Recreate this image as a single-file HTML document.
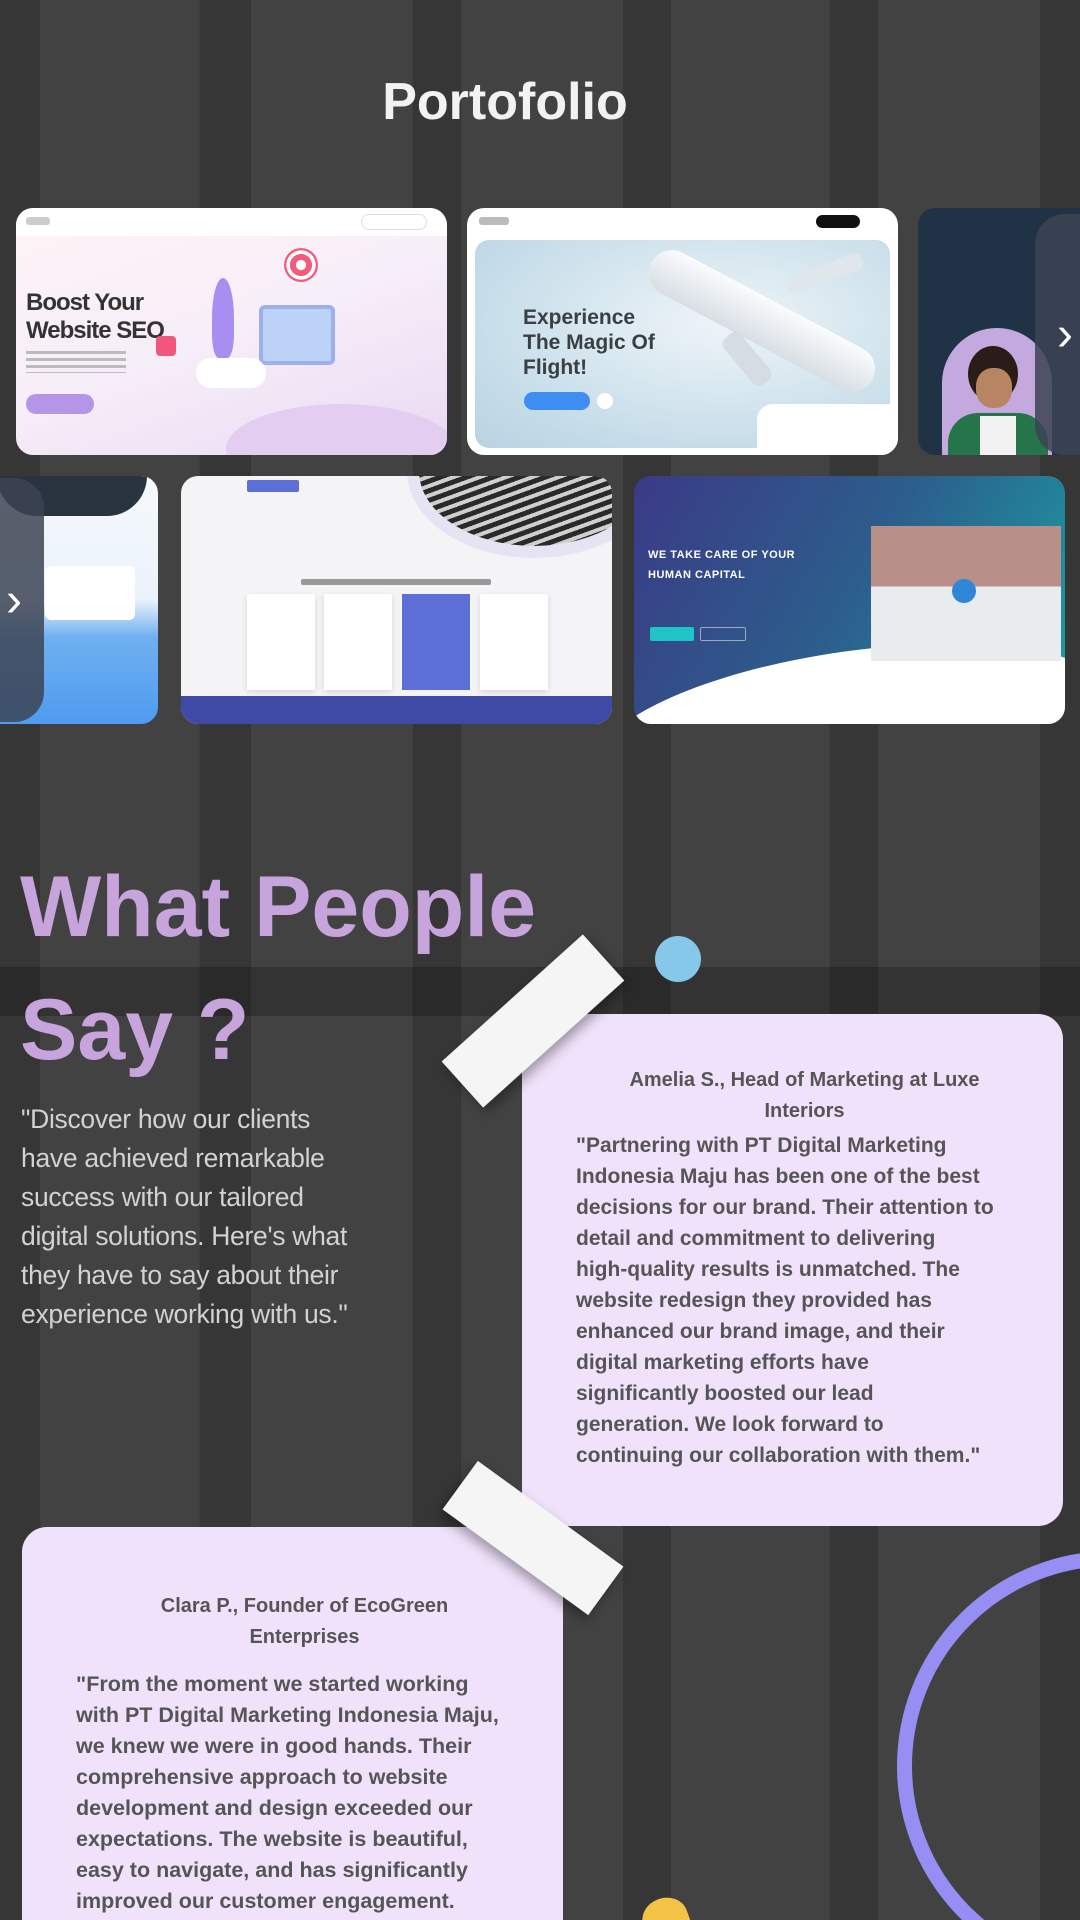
<!DOCTYPE html>
<html><head><meta charset="utf-8">
<style>
*{margin:0;padding:0;box-sizing:border-box}
html,body{width:1080px;height:1920px;overflow:hidden}
body{position:relative;font-family:"Liberation Sans",sans-serif;
background:repeating-linear-gradient(90deg,#363636 0 40px,#424242 40px 200px,#363636 200px 251px,#424242 251px 413px,#363636 413px 461px,#424242 461px 623px,#363636 623px 671px,#424242 671px 830px,#363636 830px 878px,#424242 878px 1040px,#363636 1040px 1080px)}
.a{position:absolute}
.card{position:absolute;border-radius:17px;overflow:hidden}
.band{position:absolute;left:0;top:967px;width:1080px;height:49px;background:rgba(0,0,0,.22)}
h1{position:absolute;left:0;width:1010px;text-align:center;top:72px;font-size:52px;font-weight:bold;color:#f2f2f2}
.wp{position:absolute;left:20px;color:#c8a4dc;font-size:86px;font-weight:bold;letter-spacing:0}
.para{position:absolute;left:21px;top:1100px;width:420px;color:#d2d2d2;font-size:26.5px;line-height:39px;white-space:nowrap;letter-spacing:-.3px}
.t{position:absolute;background:#f5f5f5;box-shadow:0 6px 12px rgba(0,0,0,.35)}
.tc{position:absolute;background:#f0e2fb;border-radius:25px;color:#4e4a52;font-weight:bold}
.tc .h{text-align:center;font-size:20px;line-height:31px;color:#555}
.tc .b{font-size:21px;line-height:31px;color:#555;white-space:nowrap}
.arr{position:absolute;background:rgba(60,68,84,.85);color:#fff;font-size:48px;display:flex;align-items:center;justify-content:center}
</style></head><body>
<div class="band"></div>
<h1>Portofolio</h1>

<div class="card" style="left:16px;top:208px;width:431px;height:247px;background:linear-gradient(160deg,#fff3f6 0%,#f6eef8 50%,#ead9f3 100%)">
 <div class="a" style="left:0;top:0;width:431px;height:28px;background:#fff"></div>
 <div class="a" style="left:10px;top:9px;width:24px;height:8px;background:#ccc;border-radius:3px"></div>
 <div class="a" style="left:345px;top:6px;width:66px;height:16px;border:1px solid #ddd;border-radius:8px"></div>
 <div class="a" style="left:10px;top:81px;font-size:24px;font-weight:bold;color:#333;line-height:28px;letter-spacing:-1px">Boost Your<br>Website SEO</div>
 <div class="a" style="left:10px;top:143px;width:100px;height:22px;background:repeating-linear-gradient(#bbb 0 3px,transparent 3px 7px)"></div>
 <div class="a" style="left:10px;top:186px;width:68px;height:20px;background:#b595e8;border-radius:10px"></div>
 <div class="a" style="left:210px;top:196px;width:230px;height:90px;border-radius:50%;background:#e3cdf0"></div>
 <div class="a" style="left:243px;top:97px;width:76px;height:60px;background:#bcd3f7;border:4px solid #9cb0ee;border-radius:6px"></div>
 <div class="a" style="left:196px;top:70px;width:22px;height:80px;background:#a88ef0;border-radius:50% 50% 30% 30%"></div>
 <div class="a" style="left:180px;top:150px;width:70px;height:30px;background:#fff;border-radius:15px"></div>
 <div class="a" style="left:268px;top:40px;width:34px;height:34px;border-radius:50%;background:radial-gradient(#fff 20%,#f35b7c 22% 45%,#fff 47% 60%,#f35b7c 62%)"></div>
 <div class="a" style="left:140px;top:128px;width:20px;height:20px;background:#f0577a;border-radius:4px"></div>
</div>

<div class="card" style="left:467px;top:208px;width:431px;height:247px;background:#fff">
 <div class="a" style="left:12px;top:9px;width:30px;height:8px;background:#bbb;border-radius:3px"></div>
 <div class="a" style="left:349px;top:7px;width:44px;height:13px;background:#111;border-radius:7px"></div>
 <div class="a" style="left:8px;top:32px;width:415px;height:208px;border-radius:14px;background:radial-gradient(ellipse at 60% 40%,#eef4f8,#c6dde9 70%,#b8d3e2)"></div>
 <div class="a" style="left:56px;top:97px;font-size:21px;font-weight:bold;color:#3a3f44;line-height:25px">Experience<br>The Magic Of<br>Flight!</div>
 <div class="a" style="left:57px;top:184px;width:66px;height:18px;background:#3d8df2;border-radius:9px"></div>
 <div class="a" style="left:130px;top:185px;width:16px;height:16px;background:#fff;border-radius:50%"></div>
 <div class="a" style="left:170px;top:90px;width:250px;height:46px;background:linear-gradient(#fafcfd,#d8dee4);border-radius:23px;transform:rotate(28deg)"></div>
 <div class="a" style="left:318px;top:56px;width:80px;height:18px;background:#dfe6ec;border-radius:8px;transform:rotate(-20deg)"></div>
 <div class="a" style="left:250px;top:140px;width:60px;height:22px;background:#d5dce3;border-radius:8px;transform:rotate(50deg)"></div>
 <div class="a" style="left:290px;top:196px;width:150px;height:60px;background:#fff;border-radius:16px"></div>
</div>

<div class="card" style="left:918px;top:208px;width:200px;height:247px;background:#1f3246">
 <div class="a" style="left:24px;top:120px;width:110px;height:160px;border-radius:55px 55px 0 0;background:#c3a9dd"></div>
 <div class="a" style="left:50px;top:138px;width:50px;height:56px;border-radius:50%;background:#2a1c16"></div>
 <div class="a" style="left:58px;top:160px;width:36px;height:40px;border-radius:45%;background:#b88563"></div>
 <div class="a" style="left:30px;top:205px;width:100px;height:60px;border-radius:30px 30px 0 0;background:#25744a"></div>
 <div class="a" style="left:62px;top:208px;width:36px;height:40px;background:#f2f2f2"></div>
</div>
<div class="arr" style="left:1035px;top:214px;width:60px;height:241px;border-radius:30px 0 0 30px">&#8250;</div>

<div class="card" style="left:-273px;top:476px;width:431px;height:248px;background:linear-gradient(#f6f9fd 0%,#eaf2fb 50%,#6fb0ef 65%,#4f9bf0 100%)">
 <div class="a" style="left:318px;top:90px;width:90px;height:54px;background:#fff;border-radius:6px"></div>
 <div class="a" style="left:270px;top:0px;width:150px;height:40px;background:#2a3440;border-radius:0 0 70px 70px"></div>
</div>
<div class="arr" style="left:-16px;top:478px;width:60px;height:244px;border-radius:0 30px 30px 0">&#8250;</div>

<div class="card" style="left:181px;top:476px;width:431px;height:248px;background:#f4f4f6">
 <div class="a" style="left:66px;top:4px;width:52px;height:12px;background:#5c6fd6;border-radius:2px"></div>
 <div class="a" style="left:238px;top:-80px;width:230px;height:150px;border-radius:50%;background:repeating-linear-gradient(160deg,#2a2a2a 0 5px,#cfcfcf 5px 9px);box-shadow:0 0 0 12px #e6e4f2"></div>
 <div class="a" style="left:120px;top:103px;width:190px;height:6px;background:#999;border-radius:2px"></div>
 <div class="a" style="left:66px;top:118px;width:68px;height:96px;background:#fff;box-shadow:0 2px 6px rgba(0,0,0,.12)"></div>
 <div class="a" style="left:143px;top:118px;width:68px;height:96px;background:#fff;box-shadow:0 2px 6px rgba(0,0,0,.12)"></div>
 <div class="a" style="left:221px;top:118px;width:68px;height:96px;background:#5c6fd6"></div>
 <div class="a" style="left:299px;top:118px;width:68px;height:96px;background:#fff;box-shadow:0 2px 6px rgba(0,0,0,.12)"></div>
 <div class="a" style="left:0;top:220px;width:431px;height:28px;background:#3e4aa6"></div>
</div>

<div class="card" style="left:634px;top:476px;width:431px;height:248px;background:linear-gradient(120deg,#3b3a86 0%,#2c5e8c 50%,#19a3a6 100%)">
 <div class="a" style="left:14px;top:69px;font-size:11px;font-weight:bold;color:#fff;line-height:20px;letter-spacing:.5px">WE TAKE CARE OF YOUR<br>HUMAN CAPITAL</div>
 <div class="a" style="left:16px;top:151px;width:44px;height:14px;background:#1dc6c4;border-radius:2px"></div>
 <div class="a" style="left:66px;top:151px;width:46px;height:14px;border:1px solid #9ab;border-radius:2px"></div>
 <div class="a" style="left:-40px;top:175px;width:520px;height:160px;border-radius:50% 50% 0 0;background:#fff;transform:rotate(-8deg)"></div>
 <div class="a" style="left:237px;top:50px;width:190px;height:135px;background:linear-gradient(#b89087 0 45%,#e8ecef 45% 100%)"></div>
 <div class="a" style="left:318px;top:103px;width:24px;height:24px;border-radius:50%;background:#2f86d8"></div>
</div>

<div class="wp" style="top:858px">What People</div>
<div class="wp" style="top:981px">Say ?</div>
<div class="para">"Discover how our clients<br>have achieved remarkable<br>success with our tailored<br>digital solutions. Here's what<br>they have to say about their<br>experience working with us."</div>

<div class="a" style="left:655px;top:936px;width:46px;height:46px;border-radius:50%;background:#86c8e9"></div>

<div class="tc" style="left:522px;top:1014px;width:541px;height:512px;padding:51px 30px 0 54px">
 <div class="h">Amelia S., Head of Marketing at Luxe<br>Interiors</div>
 <div class="b" style="margin-top:3px">"Partnering with PT Digital Marketing<br>Indonesia Maju has been one of the best<br>decisions for our brand. Their attention to<br>detail and commitment to delivering<br>high-quality results is unmatched. The<br>website redesign they provided has<br>enhanced our brand image, and their<br>digital marketing efforts have<br>significantly boosted our lead<br>generation. We look forward to<br>continuing our collaboration with them."</div>
</div>

<div class="t" style="left:438px;top:990px;width:190px;height:62px;transform:rotate(-42deg)"></div>

<div class="tc" style="left:22px;top:1527px;width:541px;height:420px;padding:64px 30px 0 54px">
 <div class="h">Clara P., Founder of EcoGreen<br>Enterprises</div>
 <div class="b" style="margin-top:16px;font-size:21.5px">"From the moment we started working<br>with PT Digital Marketing Indonesia Maju,<br>we knew we were in good hands. Their<br>comprehensive approach to website<br>development and design exceeded our<br>expectations. The website is beautiful,<br>easy to navigate, and has significantly<br>improved our customer engagement.</div>
</div>

<div class="t" style="left:443px;top:1508px;width:180px;height:60px;transform:rotate(36deg)"></div>

<div class="a" style="left:897px;top:1551px;width:430px;height:430px;border-radius:50%;border:15px solid #968ef3"></div>
<div class="a" style="left:642px;top:1898px;width:46px;height:40px;border-radius:50% 50% 0 0;background:#f4c244;transform:rotate(-20deg)"></div>
</body></html>
